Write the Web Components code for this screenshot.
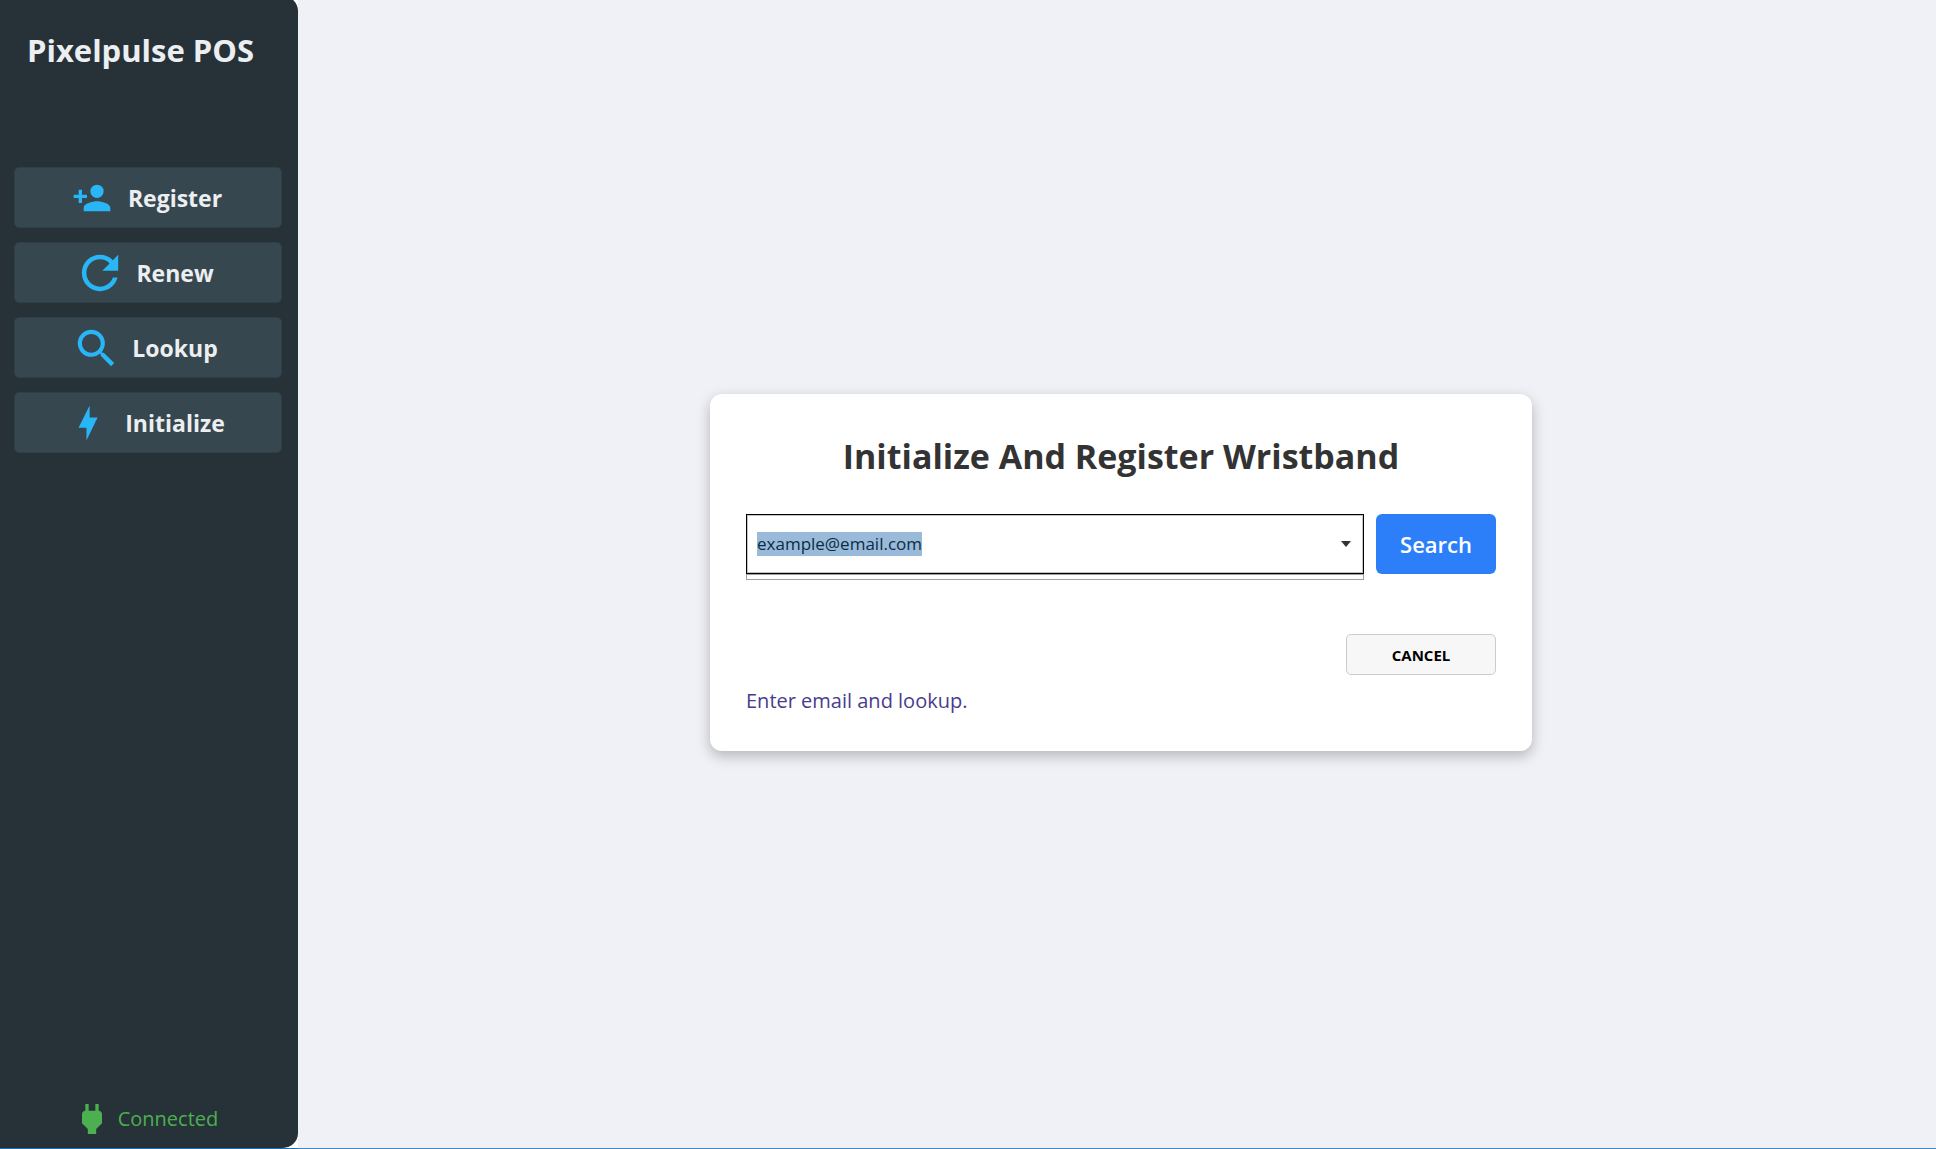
<!DOCTYPE html>
<html lang="en">
<head>
<meta charset="utf-8">
<title>Pixelpulse POS</title>
<style>
  html, body { height: 100%; margin: 0; }
  body { font-family: "Open Sans", "Noto Sans", sans-serif; background: #fff; }
</style>
</head>
<body>
<pos-app></pos-app>
<script>
const ICONS = {
  register: ['0 0 24 24', 'M15,14C12.33,14 7,15.33 7,18V20H23V18C23,15.33 17.67,14 15,14M6,10V7H4V10H1V12H4V15H6V12H9V10M15,12A4,4 0 0,0 19,8A4,4 0 0,0 15,4A4,4 0 0,0 11,8A4,4 0 0,0 15,12Z'],
  renew: ['3.2 3.2 17.6 17.6', 'M17.65 6.35C16.2 4.9 14.21 4 12 4c-4.42 0-7.99 3.58-7.99 8s3.57 8 7.99 8c3.73 0 6.84-2.55 7.73-6h-2.08c-.82 2.33-3.04 4-5.65 4-3.31 0-6-2.69-6-6s2.69-6 6-6c1.66 0 3.14.69 4.22 1.78L13 11h7V4l-2.35 2.35z'],
  lookup: ['2.15 2.15 19.2 19.2', 'M9.5,3A6.5,6.5 0 0,1 16,9.5C16,11.11 15.41,12.59 14.44,13.73L14.71,14H15.5L20.5,19L19,20.5L14,15.5V14.71L13.73,14.44C12.59,15.41 11.11,16 9.5,16A6.5,6.5 0 0,1 3,9.5A6.5,6.5 0 0,1 9.5,3M9.5,5C7,5 5,7 5,9.5C5,12 7,14 9.5,14C12,14 14,12 14,9.5C14,7 12,5 9.5,5Z'],
  initialize: ['0 -0.6 25.2 25.2', 'M11 15H6L13 1V8.5H18L11 23V15Z'],
  plug: ['0 0 24 24', 'M16,7V3H14V7H10V3H8V7C7,7 6,8 6,9V14.5L9.5,18V21H14.5V18L18,14.5V9C18,8 17,7 16,7Z'],
};

const define = (name, html, setup) => {
  const template = document.createElement('template');
  template.innerHTML = html;
  customElements.define(name, class extends HTMLElement {
    connectedCallback() {
      if (this.shadowRoot) return;
      const root = this.attachShadow({ mode: 'open' });
      root.append(template.content.cloneNode(true));
      if (setup) setup(this, root);
    }
  });
};

define('pos-icon', `
  <style>
    :host { display: block; flex: none; width: 40px; height: 40px; }
    svg { display: block; width: 100%; height: 100%; fill: currentColor; }
  </style>
  <svg aria-hidden="true"><path/></svg>`,
  (host, root) => {
    const [box, d] = ICONS[host.getAttribute('name')];
    root.querySelector('svg').setAttribute('viewBox', box);
    root.querySelector('path').setAttribute('d', d);
  });

define('pos-nav-button', `
  <style>
    :host { display: block; }
    button {
      display: flex; align-items: center; justify-content: center; gap: 16px;
      box-sizing: border-box; width: 100%; height: 61px; padding: 0 2px 0 0;
      border: 1px solid #2f3f47; border-radius: 5px; background: #37474f;
      font: 700 23px/32px "Open Sans", "Noto Sans", sans-serif; color: #eceff1;
    }
    pos-icon { color: #29b6f6; }
  </style>
  <button type="button"><slot></slot></button>`,
  (host, root) => {
    const icon = document.createElement('pos-icon');
    icon.setAttribute('name', host.getAttribute('icon'));
    root.querySelector('button').prepend(icon);
  });

define('pos-sidebar', `
  <style>
    :host {
      display: flex; flex-direction: column; box-sizing: border-box;
      width: 298px; flex: none; margin-top: -4px; padding: 32px 16px 9px 14px;
      border-radius: 0 15px 15px 0;
      background: #263238; color: #eceff1;
    }
    h1 { margin: 0 0 95px; padding-left: 13px; font-size: 31px; line-height: 44px; font-weight: 700; white-space: nowrap; }
    nav { display: flex; flex-direction: column; gap: 14px; }
    footer {
      display: flex; align-items: center; justify-content: center; gap: 6px;
      margin-top: auto; padding-right: 6px; color: #4caf50; font-size: 20px; line-height: 28px;
    }
  </style>
  <h1>Pixelpulse POS</h1>
  <nav>
    <pos-nav-button icon="register">Register</pos-nav-button>
    <pos-nav-button icon="renew">Renew</pos-nav-button>
    <pos-nav-button icon="lookup">Lookup</pos-nav-button>
    <pos-nav-button icon="initialize">Initialize</pos-nav-button>
  </nav>
  <footer><pos-icon name="plug"></pos-icon><span>Connected</span></footer>`);

define('pos-combo', `
  <style>
    :host { display: block; flex: 1; min-width: 0; }
    .box {
      display: flex; align-items: center; box-sizing: border-box; height: 60px;
      border: 1px solid #000; box-shadow: inset 0 0 0 1px #bfc4c4; background: #fff;
    }
    input {
      flex: 1; min-width: 0; border: 0; outline: 0; padding: 0 0 0 10px; background: none;
      font: 400 17px/24px "Open Sans", "Noto Sans", sans-serif; color: #0b2c48;
    }
    input::selection { background: #99bad8; color: #0b2c48; }
    button { display: grid; place-items: center; width: 34px; height: 40px; border: 0; padding: 0; background: none; }
    svg { display: block; fill: #333; }
    .list { box-sizing: border-box; height: 6px; border: 1px solid #a39f98; }
  </style>
  <div class="box">
    <input type="text" aria-label="Email" role="combobox" aria-expanded="false" value="example@email.com" spellcheck="false">
    <button type="button" aria-label="Show emails"><svg width="10" height="6" viewBox="0 0 10 6"><path d="M0 0H10L5 6Z"/></svg></button>
  </div>
  <div class="list"></div>`,
  (host, root) => {
    const input = root.querySelector('input');
    input.focus();
    input.select();
  });

define('pos-button', `
  <style>
    :host { display: block; }
    button {
      display: block; box-sizing: border-box; width: 120px; height: 60px; padding: 0; border: 0; border-radius: 6px;
      background: #2d7ff9; color: #fff; font: 600 22px/32px "Open Sans", "Noto Sans", sans-serif;
    }
    :host([kind="plain"]) button {
      width: 150px; height: 41px; padding-top: 2px; border: 1px solid #ccc; border-radius: 5px;
      background: #f7f7f7; color: #000; font-size: 15px; line-height: 20px; font-weight: 700;
    }
  </style>
  <button type="button"><slot></slot></button>`);

define('pos-card', `
  <style>
    :host {
      display: block; box-sizing: border-box; width: 822px; padding: 36px;
      border-radius: 12px; background: #fff; box-shadow: 0 5px 14px rgba(0,0,0,.25);
    }
    h2 { margin: 0 0 32px; font-size: 34px; line-height: 52px; font-weight: 700; text-align: center; color: #333; }
    .row { display: flex; align-items: flex-start; gap: 12px; margin-bottom: 54px; }
    .actions { display: flex; justify-content: flex-end; margin-bottom: 12px; }
    p { margin: 0; font-size: 20px; line-height: 28px; color: #483d8b; }
  </style>
  <h2>Initialize And Register Wristband</h2>
  <div class="row"><pos-combo></pos-combo><pos-button>Search</pos-button></div>
  <div class="actions"><pos-button kind="plain">CANCEL</pos-button></div>
  <p>Enter email and lookup.</p>`);

define('pos-app', `
  <style>
    :host { display: flex; height: 100vh; overflow: hidden; }
    aside { display: flex; flex: none; border-bottom: 1px solid #1c6fb0; }
    main { flex: 1; display: grid; place-items: center; padding: 0 0 4px 8px; border-bottom: 1px solid #4088c6; background: #f0f1f6; }
  </style>
  <aside><pos-sidebar></pos-sidebar></aside>
  <main><pos-card></pos-card></main>`);
</script>
</body>
</html>
